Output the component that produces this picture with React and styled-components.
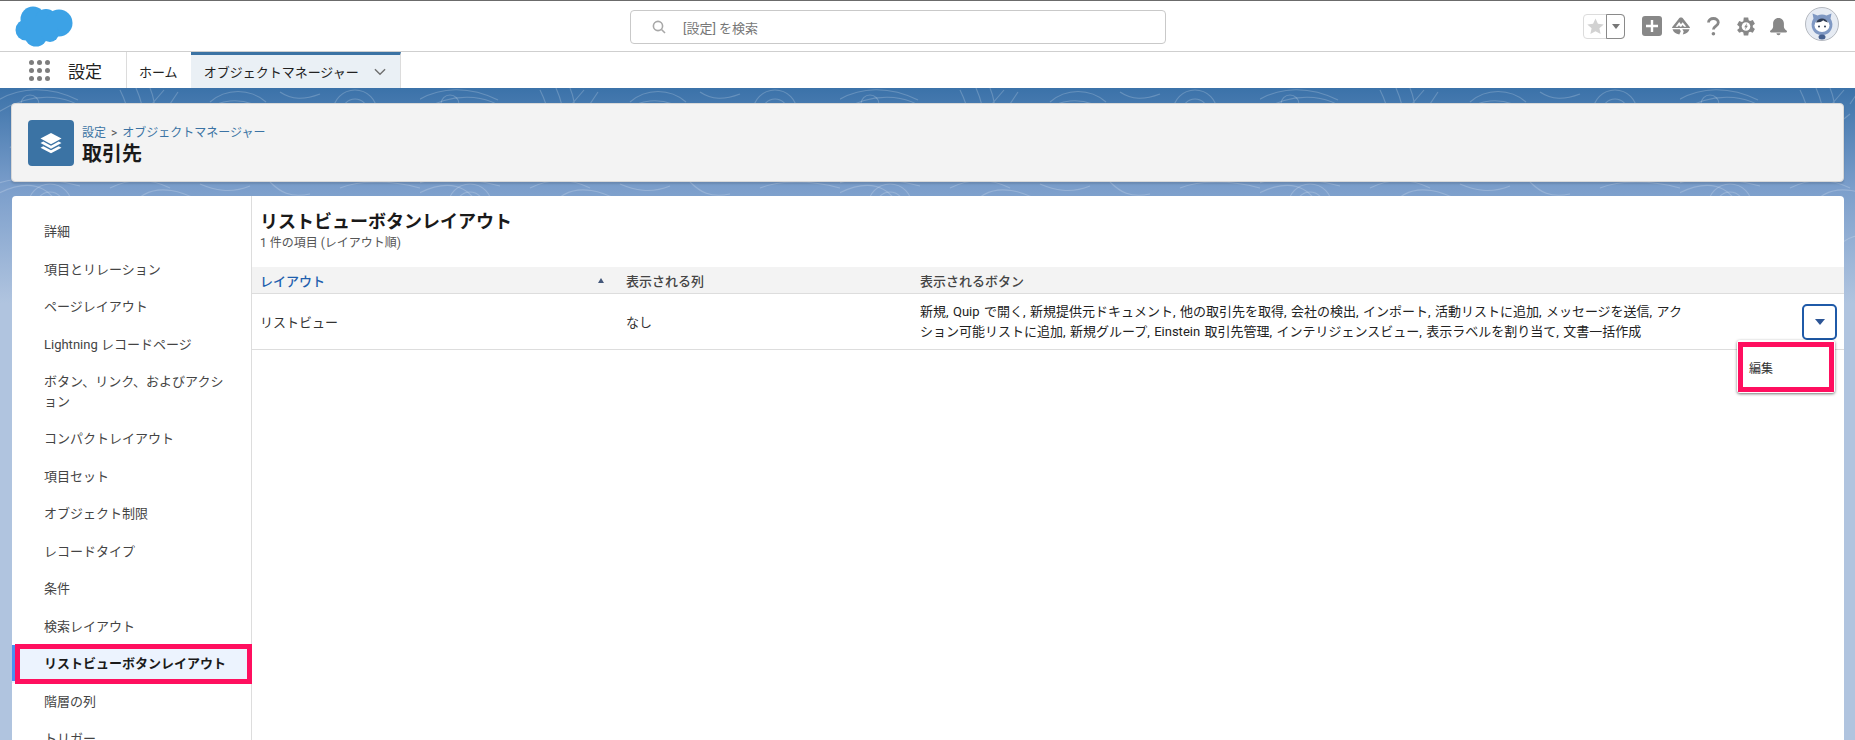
import React from "react";
import styled, { createGlobalStyle } from "styled-components";

const contour = `<svg xmlns='http://www.w3.org/2000/svg' width='420' height='190' fill='none' stroke='white' stroke-opacity='.2' stroke-width='1.1'><path d='M-10 30C30 0 70 6 90 26s50 26 80 0M10 60c20-30 60-30 80-6M-5 14C20-2 50-2 78 12M120 2c10 20 10 30 4 46M136 0c8 18 10 34 6 50M150 0c6 14 6 30 4 44M164 2l-12 14M178 4l-8 12M190 40c20-34 60-34 80-12s50 20 60-10M210 14c16-14 40-14 56 0M280 4c12 8 24 8 40 2M300 60c30-30 70-34 120-14M320 90c30-30 70-30 100-16M-10 110c40-24 60-10 70 10s50 30 70 0 60-20 90 10 50 30 90 10 60-20 110-4M-10 98c30-12 60-8 90 0M110 100c20-10 40-10 60 0M200 96c14 6 30 10 50 2M270 94c10 10 20 16 40 12M340 100c20-8 50-8 80 0M20 150c20-20 50-16 70 0M150 170c16-30 50-30 70-6M300 170c10-20 40-26 70-10'/><circle cx='50' cy='118' r='22'/><circle cx='50' cy='118' r='14'/><circle cx='355' cy='24' r='22'/><circle cx='355' cy='24' r='13'/><circle cx='30' cy='16' r='9'/><circle cx='240' cy='130' r='18'/></svg>`;

const Global = createGlobalStyle`
  html, body { margin: 0; padding: 0; background: #fff; }
  body { font-family: Roboto, "Noto Sans CJK JP", sans-serif; color: #1a1a1a; }
  #root { height: 740px; overflow: hidden; }
`;

const Page = styled.div`
  height: 740px;
  display: flex;
  flex-direction: column;
  overflow: hidden;
`;

const TopBar = styled.header`
  flex: none;
  border-top: 1px solid #6b6b6b;
  border-bottom: 1px solid #cfcfcf;
  height: 50px;
  display: grid;
  grid-template-columns: 630px 536px 1fr;
  align-items: center;
  background: #fff;
`;

const LogoBox = styled.div`
  padding-left: 15px;
  display: flex;
  align-items: center;
`;

const SearchBox = styled.div`
  height: 32px;
  margin-top: 2px;
  border: 1px solid #c9c9c9;
  border-radius: 4px;
  display: flex;
  align-items: center;
  gap: 17px;
  padding-left: 21px;
  font-size: 13px;
  color: #777;
`;

const Tools = styled.div`
  display: flex;
  align-items: center;
  padding-left: 417px;
`;

const FavGroup = styled.div`
  width: 40px;
  height: 23px;
  border: 1px solid #dcdcdc;
  border-radius: 4px;
  display: flex;
  margin-right: 17px;
`;

const FavStar = styled.span`
  width: 23px;
  display: flex;
  align-items: center;
  justify-content: center;
`;

const FavArrow = styled.span`
  flex: 1;
  margin: -1px;
  border: 1px solid #8a8a8a;
  border-radius: 0 4px 4px 0;
  display: flex;
  align-items: center;
  justify-content: center;
  &::after {
    content: "";
    border-top: 5px solid #777;
    border-left: 4.5px solid transparent;
    border-right: 4.5px solid transparent;
  }
`;

const Tool = styled.span`
  display: flex;
  width: ${(p) => p.$w}px;
  margin-right: ${(p) => p.$mr}px;
  align-items: center;
  justify-content: center;
`;

const Avatar = styled.span`
  display: flex;
  margin-top: -4px;
`;

const NavBar = styled.nav`
  height: 36px;
  flex: none;
  background: #fff;
  display: flex;
`;

const Launcher = styled.div`
  width: 127px;
  padding-left: 29px;
  box-sizing: border-box;
  border-right: 1px solid #dcdcdc;
  display: flex;
  align-items: center;
  gap: 18px;
`;

const Dots = styled.div`
  display: grid;
  grid-template-columns: repeat(3, 5px);
  gap: 3px;
  & > i {
    width: 5px;
    height: 5px;
    border-radius: 50%;
    background: #7d7d7d;
  }
`;

const AppName = styled.span`
  font-size: 17px;
  color: #222;
`;

const Tab = styled.div`
  display: flex;
  align-items: center;
  font-size: 13px;
  padding: ${(p) => (p.$active ? "0 14px 0 13px" : "0 12px")};
  background: ${(p) => (p.$active ? "#eaf0f5" : "#fff")};
  border-top: 3px solid ${(p) => (p.$active ? "#3b73a4" : "transparent")};
  border-right: 1px solid ${(p) => (p.$active ? "#dcdcdc" : "transparent")};
  box-sizing: border-box;
  color: #222;
  gap: 15px;
`;

const Stage = styled.main`
  flex: 1;
  min-height: 0;
  padding: 15px 11px 0 11px;
  display: flex;
  flex-direction: column;
  gap: 14px;
  background-image: url("data:image/svg+xml,${encodeURIComponent(contour)}"),
    linear-gradient(180deg, #3b72a9 0, #7b9ecb 100px, #b0c4df 215px, #b0c4df 100%);
  background-repeat: repeat-x, no-repeat;
`;

const PageHead = styled.section`
  height: 79px;
  flex: none;
  box-sizing: border-box;
  background: #f3f3f3;
  border: 1px solid #d8d8d8;
  border-radius: 4px;
  box-shadow: 0 2px 2px rgba(0, 0, 0, 0.12);
  padding-left: 16px;
  display: flex;
  align-items: center;
  gap: 8px;
`;

const HeadIcon = styled.div`
  width: 46px;
  height: 46px;
  border-radius: 4px;
  background: #3b73a4;
  display: flex;
  align-items: center;
  justify-content: center;
`;

const HeadText = styled.div`
  margin-top: 6px;
`;

const Crumbs = styled.div`
  font-size: 12px;
  line-height: 16px;
  color: #3b73a4;
  & > span { color: #555; margin: 0 5px; }
`;

const Title = styled.h1`
  margin: 0;
  font-size: 20px;
  line-height: 26px;
  font-weight: 700;
  color: #1a1a1a;
`;

const Panel = styled.section`
  flex: 1;
  min-height: 0;
  background: #fff;
  border-radius: 4px 4px 0 0;
  display: grid;
  grid-template-columns: 240px 1fr;
  margin-left: 1px;
`;

const Side = styled.aside`
  border-right: 1px solid #dddddd;
  padding-top: 17px;
  font-size: 13px;
  color: #444;
`;

const SideItem = styled.div`
  padding: 9px 17px 9px 32px;
  line-height: 19.5px;
  position: relative;
  line-break: anywhere;
  ${(p) =>
    p.$active &&
    `
    font-weight: 700;
    color: #1a1a1a;
    background: #ecf3fe;
    &::before {
      content: "";
      position: absolute;
      left: 0;
      top: 0;
      bottom: 2px;
      width: 3px;
      background: #4a8ff0;
    }
    &::after {
      content: "";
      position: absolute;
      left: 3px;
      right: -1px;
      top: -1px;
      bottom: -1px;
      border: 5px solid #ff0f5f;
    }
  `}
`;

const Main = styled.div`
  min-width: 0;
`;

const ListHead = styled.div`
  padding: 14px 8px 0;
  height: 71px;
  box-sizing: border-box;
`;

const ListTitle = styled.h2`
  margin: 0 0 2px;
  font-size: 18px;
  line-height: 24px;
  font-weight: 700;
  color: #1a1a1a;
`;

const ListSub = styled.div`
  font-size: 12px;
  line-height: 14px;
  color: #555;
`;

const Columns = `
  display: grid;
  grid-template-columns: 366px 294px 786px 1fr;
`;

const HeadRow = styled.div`
  ${Columns}
  height: 26px;
  background: #f3f3f3;
  border-bottom: 1px solid #ddd;
  font-size: 13px;
  font-weight: 500;
  align-items: center;
`;

const HeadCell = styled.div`
  padding: 0 9px 0 8px;
  color: ${(p) => (p.$sorted ? "#1f5fae" : "#444")};
  display: flex;
  justify-content: space-between;
  align-items: center;
`;

const SortUp = styled.span`
  margin-right: 5px;
  border-bottom: 5px solid #44587a;
  border-left: 3.5px solid transparent;
  border-right: 3.5px solid transparent;
`;

const BodyRow = styled.div`
  ${Columns}
  height: 55px;
  border-bottom: 1px solid #ddd;
  align-items: center;
  font-size: 13px;
  color: #333;
`;

const Cell = styled.div`
  padding: 0 9px 0 8px;
`;

const ButtonsCell = styled(Cell)`
  line-height: 20px;
  color: #222;
  line-break: anywhere;
  word-spacing: 1.2px;
`;

const ActionCell = styled.div`
  position: relative;
  display: flex;
  justify-content: flex-end;
  padding-right: 7px;
`;

const Trigger = styled.button`
  width: 35px;
  height: 36px;
  background: #fff;
  border: 2px solid #1f5aa8;
  border-radius: 5px;
  padding: 0;
  display: flex;
  align-items: center;
  justify-content: center;
  &::after {
    content: "";
    border-top: 6px solid #2c5596;
    border-left: 5px solid transparent;
    border-right: 5px solid transparent;
  }
`;

const Menu = styled.div`
  position: absolute;
  top: 36px;
  right: 9px;
  width: 98px;
  height: 53px;
  box-sizing: border-box;
  padding: 2px 1px 1px;
  background: #fff;
  border-radius: 3px;
  box-shadow: 0 1px 3px rgba(0, 0, 0, 0.55);
  display: flex;
  z-index: 2;
`;

const MenuItem = styled.div`
  flex: 1;
  border: 5px solid #ff0f5f;
  padding: 2px 0 0 6px;
  display: flex;
  align-items: center;
  font-size: 12px;
  color: #333;
`;

const Cloud = () => (
  <svg width="58" height="41" viewBox="0 0 58 41" fill="#3ca2e6">
    <circle cx="18" cy="13" r="12.5" />
    <circle cx="31" cy="14" r="11" />
    <circle cx="44" cy="17" r="13.5" />
    <circle cx="11" cy="24" r="10.5" />
    <circle cx="21" cy="29" r="11.5" />
    <circle cx="35" cy="27" r="9" />
    <rect x="12" y="12" width="30" height="18" />
  </svg>
);

const SearchIcon = () => (
  <svg width="14" height="14" viewBox="0 0 14 14" fill="none" stroke="#a8a8a8" strokeWidth="1.6">
    <circle cx="6" cy="6" r="4.6" />
    <path d="M9.5 9.5 13 13" />
  </svg>
);

const StarIcon = () => (
  <svg width="17" height="16" viewBox="0 0 24 23" fill="#d2d2d2">
    <path d="M12 .8l3.5 7.6 8.3.9-6.2 5.6 1.8 8.1L12 18.9l-7.4 4.1 1.8-8.1L.2 9.3l8.3-.9z" />
  </svg>
);

const PlusIcon = () => (
  <svg width="20" height="20" viewBox="0 0 20 20">
    <rect width="20" height="20" rx="3" fill="#888" />
    <path d="M10 4v12M4 10h12" stroke="#fff" strokeWidth="2.4" />
  </svg>
);

const TrailIcon = () => (
  <svg width="20" height="20" viewBox="0 0 20 20" fill="#888">
    <path d="M10 1.5c1 0 1.700.5 2.400 1.400L18.700 11c.4.5.3 1-.3 1H1.600c-.6 0-.7-.5-.3-1l6.300-8.100C8.300 2 9 1.500 10 1.500z" />
    <path d="M1.500 13.300h7.300l1 1.900-1.500 3.300C4.800 18 2.400 16 1.500 13.300zM11.300 13.300h7.200c-.9 2.800-3.300 4.700-6.700 5.200l.9-2.900z" />
    <path d="M4.600 10.800 8.200 6l1.800 2.300L11.600 6.200l3.800 4.600h-2.300L11.500 9l-1.200 1.800H9L8 9.200l-1.200 1.600z" fill="#fff" />
  </svg>
);

const HelpIcon = () => (
  <svg width="13" height="19" viewBox="0 0 13 19" fill="none" stroke="#888" strokeWidth="2.8">
    <path d="M1.500 5.600C1.500 3 3.700 1.500 6.400 1.500s4.900 1.500 4.900 4c0 3.600-4.900 3.500-4.900 6.900" />
    <circle cx="6.400" cy="16.800" r="1.800" fill="#888" stroke="none" />
  </svg>
);

const GearIcon = () => (
  <svg width="18" height="19" viewBox="0 0 18 19">
    <path fill="#888" d="M6.800.5h4.400l.5 2.700 1.400.8 2.700-.9 2.100 3.600-2.100 1.800v1.800l2.100 1.800-2.100 3.600-2.700-.9-1.400.8-.5 2.800H6.800l-.5-2.800-1.400-.8-2.700.9L.1 13.100l2.100-1.800V9.500L.1 7.700l2.100-3.600 2.700.9 1.400-.8z" />
    <circle cx="9" cy="9.500" r="4.300" fill="#fff" />
    <path fill="#888" d="M10 6 7.200 10.200h1.500l-.7 2.800 2.900-4.200H9.400z" />
  </svg>
);

const BellIcon = () => (
  <svg width="19" height="19" viewBox="0 0 19 19" fill="#888">
    <path d="M9.500 1C6.100 1 4.100 3.600 4.100 6.600v3.200c0 1.600-1.100 2.700-2.600 3.700-.8.600-.6 1.900.5 1.900h15c1.100 0 1.300-1.300.5-1.900-1.500-1-2.600-2.100-2.600-3.700V6.600C14.900 3.600 12.900 1 9.500 1z" />
    <path d="M7.500 16.200h4c0 1.200-.9 2-2 2s-2-.8-2-2z" />
  </svg>
);

const AstroAvatar = () => (
  <svg width="34" height="34" viewBox="0 0 34 34">
    <circle cx="17" cy="17" r="16.500" fill="#e6ebf3" stroke="#b5b9c0" />
    <path d="M8.500 11.500 7.500 6.500l5 2a11.500 11.500 0 0 1 9 0l5-2-1 5a11.500 11.500 0 0 1 .8 11c-1.800 3.800-5.300 5.500-9.300 5.500s-7.500-1.700-9.300-5.500a11.500 11.500 0 0 1 .8-11z" fill="#7f98c3" />
    <ellipse cx="17" cy="18.500" rx="7.500" ry="6.500" fill="#fff" />
    <path d="M11 15.500c1-2.700 3.500-4 6-4s5 1.300 6 4c-2-.3-3.800-1.200-4.800-2.200-1.400 1.400-3.800 2.200-7.200 2.200z" fill="#2e3b52" />
    <circle cx="14" cy="19.500" r="1" fill="#2e3b52" />
    <circle cx="20" cy="19.500" r="1" fill="#2e3b52" />
    <ellipse cx="17" cy="30" rx="3.500" ry="2.500" fill="#46608f" />
  </svg>
);

const LayersIcon = () => (
  <svg width="24" height="24" viewBox="0 0 24 24" fill="#fff">
    <path d="M12 2 22.500 7.600 12 13.200 1.500 7.600z" />
    <path d="M4.300 10.600 12 14.700l7.700-4.100 2.800 1.500L12 17.700 1.500 12.100z" />
    <path d="M4.300 15.200 12 19.300l7.700-4.100 2.800 1.500L12 22.300 1.500 16.700z" />
  </svg>
);

const Chevron = () => (
  <svg width="12" height="8" viewBox="0 0 13 8" fill="none" stroke="#6f6f6f" strokeWidth="1.5">
    <path d="M1 1l5.500 5.500L12 1" />
  </svg>
);

const sideItems = [
  "詳細",
  "項目とリレーション",
  "ページレイアウト",
  "Lightning レコードページ",
  "ボタン、リンク、およびアクション",
  "コンパクトレイアウト",
  "項目セット",
  "オブジェクト制限",
  "レコードタイプ",
  "条件",
  "検索レイアウト",
  "リストビューボタンレイアウト",
  "階層の列",
  "トリガー",
];

const buttonsText =
  "新規, Quip で開く, 新規提供元ドキュメント, 他の取引先を取得, 会社の検出, インポート, 活動リストに追加, メッセージを送信, アクション可能リストに追加, 新規グループ, Einstein 取引先管理, インテリジェンスビュー, 表示ラベルを割り当て, 文書一括作成";

export default function App() {
  return (
    <Page>
      <Global />
      <TopBar>
        <LogoBox>
          <Cloud />
        </LogoBox>
        <SearchBox>
          <SearchIcon />
          <span>[設定] を検索</span>
        </SearchBox>
        <Tools>
          <FavGroup>
            <FavStar>
              <StarIcon />
            </FavStar>
            <FavArrow />
          </FavGroup>
          <Tool $w={20} $mr={9}>
            <PlusIcon />
          </Tool>
          <Tool $w={20} $mr={16}>
            <TrailIcon />
          </Tool>
          <Tool $w={13} $mr={17}>
            <HelpIcon />
          </Tool>
          <Tool $w={18} $mr={14}>
            <GearIcon />
          </Tool>
          <Tool $w={19} $mr={17}>
            <BellIcon />
          </Tool>
          <Avatar>
            <AstroAvatar />
          </Avatar>
        </Tools>
      </TopBar>
      <NavBar>
        <Launcher>
          <Dots>
            {Array.from({ length: 9 }, (_, i) => (
              <i key={i} />
            ))}
          </Dots>
          <AppName>設定</AppName>
        </Launcher>
        <Tab>ホーム</Tab>
        <Tab $active>
          オブジェクトマネージャー
          <Chevron />
        </Tab>
      </NavBar>
      <Stage>
        <PageHead>
          <HeadIcon>
            <LayersIcon />
          </HeadIcon>
          <HeadText>
            <Crumbs>
              設定<span>&gt;</span>オブジェクトマネージャー
            </Crumbs>
            <Title>取引先</Title>
          </HeadText>
        </PageHead>
        <Panel>
          <Side>
            {sideItems.map((label) => (
              <SideItem key={label} $active={label === "リストビューボタンレイアウト"}>
                {label}
              </SideItem>
            ))}
          </Side>
          <Main>
            <ListHead>
              <ListTitle>リストビューボタンレイアウト</ListTitle>
              <ListSub>1 件の項目 (レイアウト順)</ListSub>
            </ListHead>
            <HeadRow>
              <HeadCell $sorted>
                レイアウト
                <SortUp />
              </HeadCell>
              <HeadCell>表示される列</HeadCell>
              <HeadCell>表示されるボタン</HeadCell>
              <span />
            </HeadRow>
            <BodyRow>
              <Cell>リストビュー</Cell>
              <Cell>なし</Cell>
              <ButtonsCell>{buttonsText}</ButtonsCell>
              <ActionCell>
                <Trigger aria-label="アクション" />
                <Menu>
                  <MenuItem>編集</MenuItem>
                </Menu>
              </ActionCell>
            </BodyRow>
          </Main>
        </Panel>
      </Stage>
    </Page>
  );
}
